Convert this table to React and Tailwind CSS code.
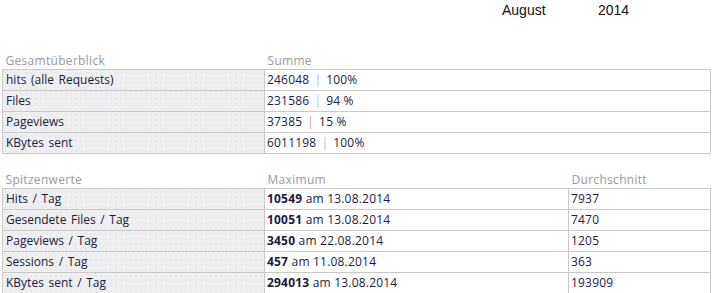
import React from "react";

const font = { fontFamily: '"Open Sans", "Noto Sans", sans-serif' };

function Sep({ color }) {
  return <span className={color === "red" ? "text-[#d4a0a0] mx-[5px]" : "text-[#9cc3ea] mx-[5px]"}>|</span>;
}

const labelCls =
  "border border-[#c9c9c9] bg-[#efefef] bg-[radial-gradient(circle,#c9d5ea_0.7px,transparent_0.9px)] bg-[length:5px_5px] pl-[3px] h-[21px] p-0 leading-[20px] whitespace-nowrap [word-spacing:1.5px]";
const valCls = "border border-[#c9c9c9] bg-white pl-[2px] h-[21px] p-0 leading-[20px] whitespace-nowrap tracking-[0.2px]";
const headCls = "text-left font-normal text-[#9a9a9a] pl-[3px] p-0 h-[16px] leading-[16px] align-bottom tracking-[0.3px]";

export default function App() {
  const overview = [
    ["hits (alle Requests)", "246048", "100%", "blue"],
    ["Files", "231586", "94 %", "blue"],
    ["Pageviews", "37385", "15 %", "red"],
    ["KBytes sent", "6011198", "100%", "blue"],
  ];
  const peaks = [
    ["Hits / Tag", "10549", "am 13.08.2014", "7937"],
    ["Gesendete Files / Tag", "10051", "am 13.08.2014", "7470"],
    ["Pageviews / Tag", "3450", "am 22.08.2014", "1205"],
    ["Sessions / Tag", "457", "am 11.08.2014", "363"],
    ["KBytes sent / Tag", "294013", "am 13.08.2014", "193909"],
  ];
  return (
    <div className="w-[713px] h-[293px] bg-white overflow-hidden">
      <div
        className="flex h-[21px] items-center pl-[502px] text-[14px] text-[#111] pt-[0px]"
        style={{ fontFamily: '"Liberation Sans", Arial, sans-serif' }}
      >
        <span className="w-[96px]">August</span>
        <span>2014</span>
      </div>
      <div className="pt-[32px] text-[12px] text-[#1c1c3c]" style={font}>
        <table className="ml-[2px] w-[709px] border-collapse table-fixed">
          <colgroup>
            <col className="w-[262px]" />
            <col />
          </colgroup>
          <thead>
            <tr>
              <th className={headCls}>Gesamtüberblick</th>
              <th className={headCls}>Summe</th>
            </tr>
          </thead>
          <tbody>
            {overview.map(([l, n, p, c]) => (
              <tr key={l}>
                <td className={labelCls}>{l}</td>
                <td className={valCls}>
                  {n}
                  <Sep color={c} />
                  {p}
                </td>
              </tr>
            ))}
          </tbody>
        </table>
        <table className="ml-[2px] mt-[18px] w-[709px] border-collapse table-fixed">
          <colgroup>
            <col className="w-[262px]" />
            <col className="w-[304px]" />
            <col />
          </colgroup>
          <thead>
            <tr>
              <th className={headCls}>Spitzenwerte</th>
              <th className={headCls}>Maximum</th>
              <th className={headCls}>Durchschnitt</th>
            </tr>
          </thead>
          <tbody>
            {peaks.map(([l, m, d, a]) => (
              <tr key={l}>
                <td className={labelCls}>{l}</td>
                <td className={valCls}>
                  <b className="font-bold">{m}</b> {d}
                </td>
                <td className={valCls}>{a}</td>
              </tr>
            ))}
          </tbody>
        </table>
      </div>
    </div>
  );
}
